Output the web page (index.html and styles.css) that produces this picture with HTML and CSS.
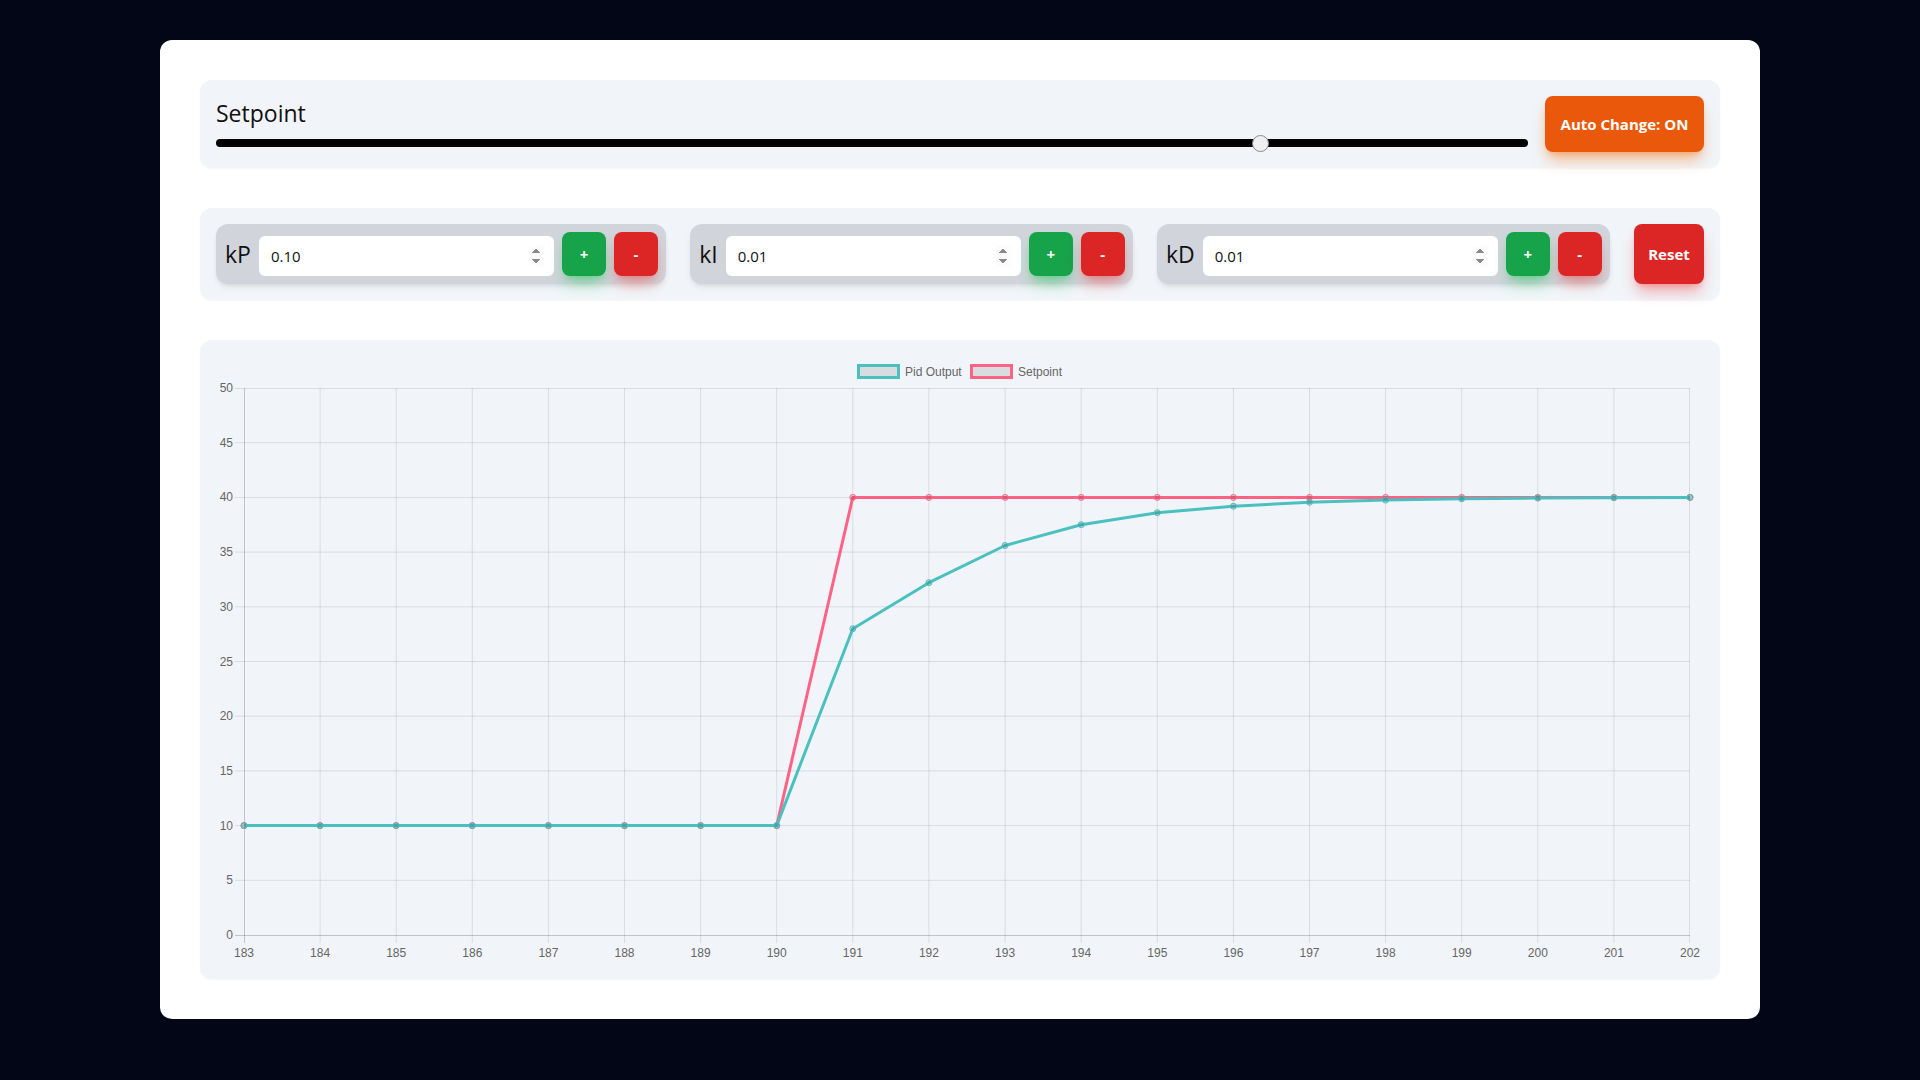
FILE: index.html
```html
<!DOCTYPE html>
<html>
<head>
<meta charset="utf-8">
<meta name="viewport" content="initial-scale=1.0, width=device-width">
<title>PID Tuner</title>
<link rel="stylesheet" href="styles.css">
</head>
<body>

<div class="card">

  <div class="panel setpoint">
    <div class="setpoint-col">
      <label class="setpoint-label" for="sp">Setpoint</label>
      <input id="sp" class="slider" type="range" min="0" max="50" value="40">
    </div>
    <button type="button" class="btn btn-orange auto">Auto Change: ON</button>
  </div>

  <div class="panel gains">
    <div class="gain">
      <span class="gain-name">kP</span>
      <input class="gain-input" type="number" step="0.01" value="0.10">
      <button type="button" class="btn btn-green sq">+</button>
      <button type="button" class="btn btn-red sq">-</button>
    </div>
    <div class="gain">
      <span class="gain-name">kI</span>
      <input class="gain-input" type="number" step="0.01" value="0.01">
      <button type="button" class="btn btn-green sq">+</button>
      <button type="button" class="btn btn-red sq">-</button>
    </div>
    <div class="gain">
      <span class="gain-name">kD</span>
      <input class="gain-input" type="number" step="0.01" value="0.01">
      <button type="button" class="btn btn-green sq">+</button>
      <button type="button" class="btn btn-red sq">-</button>
    </div>
    <button type="button" class="btn btn-red reset">Reset</button>
  </div>

  <div class="panel chart-panel">
    <svg class="chart" viewBox="0 0 1487 607" width="1487" height="607" xmlns="http://www.w3.org/2000/svg">
      <!-- legend -->
      <rect class="lg-box" x="642.5" y="9.5" width="40" height="12" stroke="rgb(75,192,192)" />
      <text class="lbl" x="689" y="20">Pid Output</text>
      <rect class="lg-box" x="755.5" y="9.5" width="40" height="12" stroke="rgb(255,99,132)" />
      <text class="lbl" x="802" y="20">Setpoint</text>

      <!-- horizontal grid -->
      <path class="grid" d="M19 32.5H1474 M19 86.7H1474 M19 141.4H1474 M19 196.1H1474 M19 250.8H1474 M19 305.5H1474 M19 360.2H1474 M19 414.9H1474 M19 469.6H1474 M19 524.3H1474" />
      <path class="axis" d="M19 579.5H1474" />

      <!-- vertical grid -->
      <path class="grid" d="M104.1 32V587 M180.2 32V587 M256.3 32V587 M332.4 32V587 M408.5 32V587 M484.6 32V587 M560.7 32V587 M636.8 32V587 M712.9 32V587 M789.1 32V587 M865.2 32V587 M941.3 32V587 M1017.4 32V587 M1093.5 32V587 M1169.6 32V587 M1245.7 32V587 M1321.8 32V587 M1397.9 32V587 M1473.5 32V587" />
      <path class="axis" d="M28.5 32V587" />

      <!-- y labels -->
      <g class="lbl ylbl">
        <text x="17" y="36">50</text>
        <text x="17" y="90.7">45</text>
        <text x="17" y="145.4">40</text>
        <text x="17" y="200.1">35</text>
        <text x="17" y="254.8">30</text>
        <text x="17" y="309.5">25</text>
        <text x="17" y="364.2">20</text>
        <text x="17" y="418.9">15</text>
        <text x="17" y="473.6">10</text>
        <text x="17" y="528.3">5</text>
        <text x="17" y="583">0</text>
      </g>

      <!-- x labels -->
      <g class="lbl xlbl">
        <text x="28" y="601">183</text>
        <text x="104.1" y="601">184</text>
        <text x="180.2" y="601">185</text>
        <text x="256.3" y="601">186</text>
        <text x="332.4" y="601">187</text>
        <text x="408.5" y="601">188</text>
        <text x="484.6" y="601">189</text>
        <text x="560.7" y="601">190</text>
        <text x="636.8" y="601">191</text>
        <text x="712.9" y="601">192</text>
        <text x="789.1" y="601">193</text>
        <text x="865.2" y="601">194</text>
        <text x="941.3" y="601">195</text>
        <text x="1017.4" y="601">196</text>
        <text x="1093.5" y="601">197</text>
        <text x="1169.6" y="601">198</text>
        <text x="1245.7" y="601">199</text>
        <text x="1321.8" y="601">200</text>
        <text x="1397.9" y="601">201</text>
        <text x="1474" y="601">202</text>
      </g>

      <!-- setpoint dataset -->
      <path class="line sp-line" d="M28 469.6H560.7L636.8 141.4H1474" />
      <g class="pt sp-pt">
        <circle cx="28" cy="469.6" r="3" /><circle cx="104.1" cy="469.6" r="3" />
        <circle cx="180.2" cy="469.6" r="3" /><circle cx="256.3" cy="469.6" r="3" />
        <circle cx="332.4" cy="469.6" r="3" /><circle cx="408.5" cy="469.6" r="3" />
        <circle cx="484.6" cy="469.6" r="3" /><circle cx="560.7" cy="469.6" r="3" />
        <circle cx="636.8" cy="141.4" r="3" /><circle cx="712.9" cy="141.4" r="3" />
        <circle cx="789.1" cy="141.4" r="3" /><circle cx="865.2" cy="141.4" r="3" />
        <circle cx="941.3" cy="141.4" r="3" /><circle cx="1017.4" cy="141.4" r="3" />
        <circle cx="1093.5" cy="141.4" r="3" /><circle cx="1169.6" cy="141.4" r="3" />
        <circle cx="1245.7" cy="141.4" r="3" /><circle cx="1321.8" cy="141.4" r="3" />
        <circle cx="1397.9" cy="141.4" r="3" /><circle cx="1474" cy="141.4" r="3" />
      </g>

      <!-- pid output dataset -->
      <path class="line pid-line" d="M28 469.6H560.7L636.8 272.7L712.9 226.7L789.1 189.5L865.2 168.7L941.3 156.7L1017.4 150.2L1093.5 146.3L1169.6 144.1L1245.7 142.8L1321.8 142.1L1397.9 141.7L1474 141.4" />
      <g class="pt pid-pt">
        <circle cx="28" cy="469.6" r="3" /><circle cx="104.1" cy="469.6" r="3" />
        <circle cx="180.2" cy="469.6" r="3" /><circle cx="256.3" cy="469.6" r="3" />
        <circle cx="332.4" cy="469.6" r="3" /><circle cx="408.5" cy="469.6" r="3" />
        <circle cx="484.6" cy="469.6" r="3" /><circle cx="560.7" cy="469.6" r="3" />
        <circle cx="636.8" cy="272.7" r="3" /><circle cx="712.9" cy="226.7" r="3" />
        <circle cx="789.1" cy="189.5" r="3" /><circle cx="865.2" cy="168.7" r="3" />
        <circle cx="941.3" cy="156.7" r="3" /><circle cx="1017.4" cy="150.2" r="3" />
        <circle cx="1093.5" cy="146.3" r="3" /><circle cx="1169.6" cy="144.1" r="3" />
        <circle cx="1245.7" cy="142.8" r="3" /><circle cx="1321.8" cy="142.1" r="3" />
        <circle cx="1397.9" cy="141.7" r="3" /><circle cx="1474" cy="141.4" r="3" />
      </g>
    </svg>
  </div>

</div>

</body>
</html>
```

FILE: styles.css
```css
*{box-sizing:border-box;}
html,body{margin:0;padding:0;}
body{
  background:#020617;
  font-family:"Open Sans","Noto Sans",sans-serif;
  color:#111;
  padding-top:40px;
  min-height:1080px;
}
.card{
  width:1600px;
  margin:0 auto;
  background:#fff;
  border-radius:12px;
  padding:40px;
  display:flex;
  flex-direction:column;
  gap:40px;
}
.panel{
  background:#f1f5f9;
  border-radius:12px;
  padding:16px;
  box-shadow:0 1px 2px rgba(0,0,0,0.04);
}

/* setpoint */
.setpoint{display:flex;align-items:center;gap:17px;}
.setpoint-col{flex:1;display:flex;flex-direction:column;}
.setpoint-label{font-size:23px;line-height:30px;color:#111;}
.slider{
  -webkit-appearance:none;
  appearance:none;
  width:100%;
  height:8px;
  margin:11px 0 3px 0;
  background:#000;
  border-radius:4px;
  outline:none;
}
.slider::-webkit-slider-thumb{
  -webkit-appearance:none;
  width:17px;height:17px;
  border-radius:50%;
  background:#efefef;
  border:1px solid #8a8a8a;
}

/* buttons */
.btn{
  border:none;
  color:#fff;
  font-family:inherit;
  font-weight:bold;
  cursor:pointer;
  border-radius:8px;
}
.btn-orange{
  background:#ea580c;
  box-shadow:0 10px 15px -3px rgba(249,115,22,0.5),0 4px 6px -4px rgba(249,115,22,0.5);
}
.btn-green{
  background:#16a34a;
  box-shadow:0 10px 15px -3px rgba(34,197,94,0.45),0 4px 6px -4px rgba(34,197,94,0.45);
}
.btn-red{
  background:#dc2626;
  box-shadow:0 10px 15px -3px rgba(239,68,68,0.45),0 4px 6px -4px rgba(239,68,68,0.45);
}
.auto{width:159px;height:56px;font-size:15px;padding:0;}
.sq{width:44px;height:44px;font-size:15px;padding:0;flex:none;}
.reset{width:70px;font-size:15px;padding:0;flex:none;}

/* gains */
.gains{display:flex;justify-content:space-between;}
.gain{
  display:flex;
  align-items:center;
  gap:8px;
  background:#d1d5db;
  border-radius:12px;
  padding:8px 8px 8px 9px;
  box-shadow:0 4px 6px -1px rgba(0,0,0,0.08),0 2px 4px -2px rgba(0,0,0,0.08);
}
.gain-name{font-size:23px;line-height:30px;color:#111;}
.gain-input{
  width:295px;
  height:40px;
  margin-top:4px;
  border:none;
  border-radius:6px;
  background:#fff;
  padding:0 10px 0 12px;
  font-family:inherit;
  font-size:15px;
  color:#111;
  outline:none;
}
.gain-input::-webkit-inner-spin-button{opacity:1;}

/* chart */
.chart-panel{height:639px;}
.chart{display:block;}
.grid{stroke:rgba(0,0,0,0.1);stroke-width:1;fill:none;}
.axis{stroke:rgba(0,0,0,0.2);stroke-width:1;fill:none;}
.lbl{font-family:"Liberation Sans",Arial,sans-serif;font-size:12px;fill:#666;}
.ylbl text{text-anchor:end;}
.xlbl text{text-anchor:middle;}
.lg-box{fill:rgba(0,0,0,0.1);stroke-width:3;}
.line{fill:none;stroke-width:3;stroke-linejoin:round;}
.sp-line{stroke:rgb(255,99,132);}
.pid-line{stroke:rgb(75,192,192);}
.pt circle{fill:rgba(0,0,0,0.12);stroke-width:1;}
.sp-pt circle{stroke:rgb(255,99,132);}
.pid-pt circle{stroke:rgb(75,192,192);}
```
